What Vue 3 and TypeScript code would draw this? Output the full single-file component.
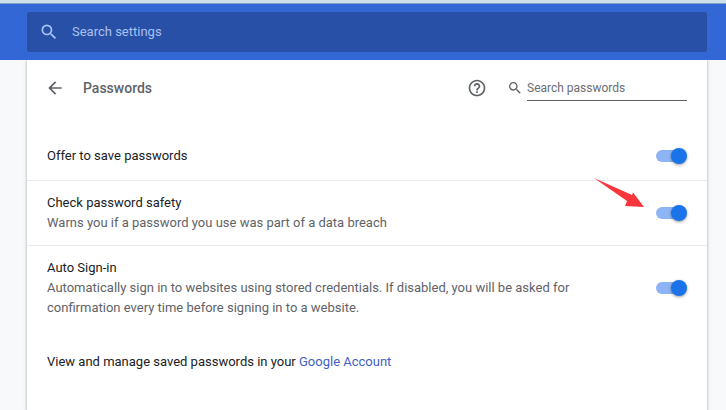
<script setup lang="ts">
import { reactive, ref } from 'vue'

interface Setting {
  id: string
  label: string
  sub?: string
  on: boolean
  pointed?: boolean
}

const query = ref('')
const passwordQuery = ref('')

const settings = reactive<Setting[]>([
  { id: 'offer', label: 'Offer to save passwords', on: true },
  {
    id: 'safety',
    label: 'Check password safety',
    sub: 'Warns you if a password you use was part of a data breach',
    on: true,
    pointed: true,
  },
  {
    id: 'auto',
    label: 'Auto Sign-in',
    sub: 'Automatically sign in to websites using stored credentials. If disabled, you will be asked for confirmation every time before signing in to a website.',
    on: true,
  },
])
</script>

<template>
  <div class="page">
    <header class="toolbar">
      <label class="search">
        <svg class="search-icon" viewBox="0 0 24 24" aria-hidden="true">
          <path d="M15.5 14h-.79l-.28-.27A6.471 6.471 0 0 0 16 9.5 6.5 6.5 0 1 0 9.5 16c1.61 0 3.09-.59 4.23-1.57l.27.28v.79l5 4.99L20.49 19l-4.99-5zm-6 0C7.01 14 5 11.99 5 9.5S7.01 5 9.5 5 14 7.01 14 9.5 11.99 14 9.5 14z" />
        </svg>
        <input v-model="query" type="text" placeholder="Search settings" aria-label="Search settings" />
      </label>
    </header>

    <main class="card">
      <div class="heading">
        <button class="icon-button" type="button" aria-label="Back">
          <svg class="back-icon" viewBox="0 0 24 24" aria-hidden="true">
            <path d="M20 11H7.83l5.59-5.59L12 4l-8 8 8 8 1.41-1.41L7.83 13H20v-2z" />
          </svg>
        </button>
        <h1>Passwords</h1>
        <button class="icon-button help" type="button" aria-label="Help">
          <svg class="help-icon" viewBox="0 0 24 24" aria-hidden="true">
            <path d="M11 18h2v-2h-2v2zm1-16C6.48 2 2 6.48 2 12s4.48 10 10 10 10-4.48 10-10S17.52 2 12 2zm0 18c-4.41 0-8-3.59-8-8s3.59-8 8-8 8 3.59 8 8-3.59 8-8 8zm0-14c-2.21 0-4 1.79-4 4h2c0-1.1.9-2 2-2s2 .9 2 2c0 2-3 1.75-3 5h2c0-2.25 3-2.5 3-5 0-2.21-1.79-4-4-4z" />
          </svg>
        </button>
        <label class="filter">
          <svg class="filter-icon" viewBox="0 0 24 24" aria-hidden="true">
            <path d="M15.5 14h-.79l-.28-.27A6.471 6.471 0 0 0 16 9.5 6.5 6.5 0 1 0 9.5 16c1.61 0 3.09-.59 4.23-1.57l.27.28v.79l5 4.99L20.49 19l-4.99-5zm-6 0C7.01 14 5 11.99 5 9.5S7.01 5 9.5 5 14 7.01 14 9.5 11.99 14 9.5 14z" />
          </svg>
          <input v-model="passwordQuery" type="text" placeholder="Search passwords" aria-label="Search passwords" />
        </label>
      </div>

      <div v-for="s in settings" :key="s.id" class="row">
        <label class="text" :for="s.id">
          <span class="label">{{ s.label }}</span>
          <span v-if="s.sub" class="sub">{{ s.sub }}</span>
        </label>
        <div class="control">
          <input :id="s.id" v-model="s.on" class="toggle" type="checkbox" role="switch" />
          <svg v-if="s.pointed" class="pointer" viewBox="0 0 52 32" aria-hidden="true">
            <path d="M1 1 L39 18 L40 15.5 L51 30 L32 29 L34 24 Z" />
          </svg>
        </div>
      </div>

      <p class="manage">View and manage saved passwords in your <a href="#account">Google Account</a></p>
    </main>
  </div>
</template>

<style>
body {
  background: #f8f9fa;
}
</style>

<style scoped>
.page {
  display: flex;
  flex-direction: column;
  min-height: 100vh;
  box-sizing: border-box;
  border-top: 3px solid #cfe1e8;
  font: 13px/20px Roboto, "Liberation Sans", sans-serif;
  color: #202124;
}

.toolbar {
  padding: 8px 19px 8px 27px;
  border-top: 1px solid #7f9fc4;
  background: #3367d6;
}

.search {
  display: flex;
  align-items: center;
  height: 40px;
  border-radius: 2px;
  background: #2850a7;
}

input {
  font: inherit;
}

.search input,
.filter input {
  flex: 1;
  min-width: 0;
  padding: 0;
  border: 0;
  outline: 0;
  background: transparent;
  color: inherit;
}

.search-icon {
  width: 20px;
  height: 20px;
  margin: 0 13px 0 12px;
  fill: #a9c5f8;
}

.search input::placeholder {
  color: #a9c1ef;
  opacity: 1;
}

.card {
  flex: 1;
  margin: 0 19px 0 27px;
  background: #fff;
  box-shadow: 0 1px 2px rgba(60, 64, 67, 0.3), 0 1px 3px 1px rgba(60, 64, 67, 0.15);
  clip-path: inset(0 -4px);
}

.heading {
  display: flex;
  align-items: center;
  height: 56px;
  padding: 0 20px 0 18px;
  margin-bottom: 16px;
}

.icon-button {
  display: flex;
  padding: 0;
  border: 0;
  background: none;
  fill: #5f6368;
}

.back-icon {
  width: 20px;
  height: 20px;
}

h1 {
  flex: 1;
  margin: 0 0 0 18px;
  font-size: 14px;
  font-weight: 500;
  line-height: 20px;
  color: #5f6368;
}

.help {
  margin-right: 20px;
}

.help-icon {
  width: 20px;
  height: 20px;
}

.filter {
  display: flex;
  align-items: center;
  gap: 4px;
}

.filter-icon {
  width: 16px;
  height: 16px;
  fill: #5f6368;
}

.filter input {
  flex: none;
  width: 160px;
  height: 26px;
  box-sizing: border-box;
  border-bottom: 1px solid #5f6368;
  font-size: 12px;
}

.filter input::placeholder {
  color: #6b6e72;
  opacity: 1;
}

.row {
  display: flex;
  align-items: center;
  min-height: 48px;
  padding: 0 20px;
}

.row + .row {
  border-top: 1px solid #e8eaed;
}

.text {
  flex: 1;
  padding: 12px 0;
}

.label,
.sub {
  display: block;
}

.sub {
  color: #5f6368;
}

.control {
  position: relative;
  display: flex;
  margin-left: 80px;
}

.toggle {
  position: relative;
  display: flex;
  align-items: center;
  appearance: none;
  width: 31px;
  height: 16px;
  margin: 0;
}

.toggle::before {
  content: "";
  width: 28px;
  height: 12px;
  border-radius: 6px;
  background: #8db5f5;
}

.toggle::after {
  content: "";
  position: absolute;
  top: 0;
  left: 0;
  width: 16px;
  height: 16px;
  border-radius: 50%;
  background: #1a73e8;
  box-shadow: 0 1px 3px rgba(0, 0, 0, 0.4);
}

.toggle:checked::after {
  left: auto;
  right: 0;
}

.pointer {
  position: absolute;
  right: 42px;
  bottom: 12px;
  width: 52px;
  height: 32px;
  fill: #f9363b;
}

.manage {
  margin: 0;
  padding: 22px 20px;
}

.manage a {
  color: #3f5fc4;
  text-decoration: none;
}
</style>
